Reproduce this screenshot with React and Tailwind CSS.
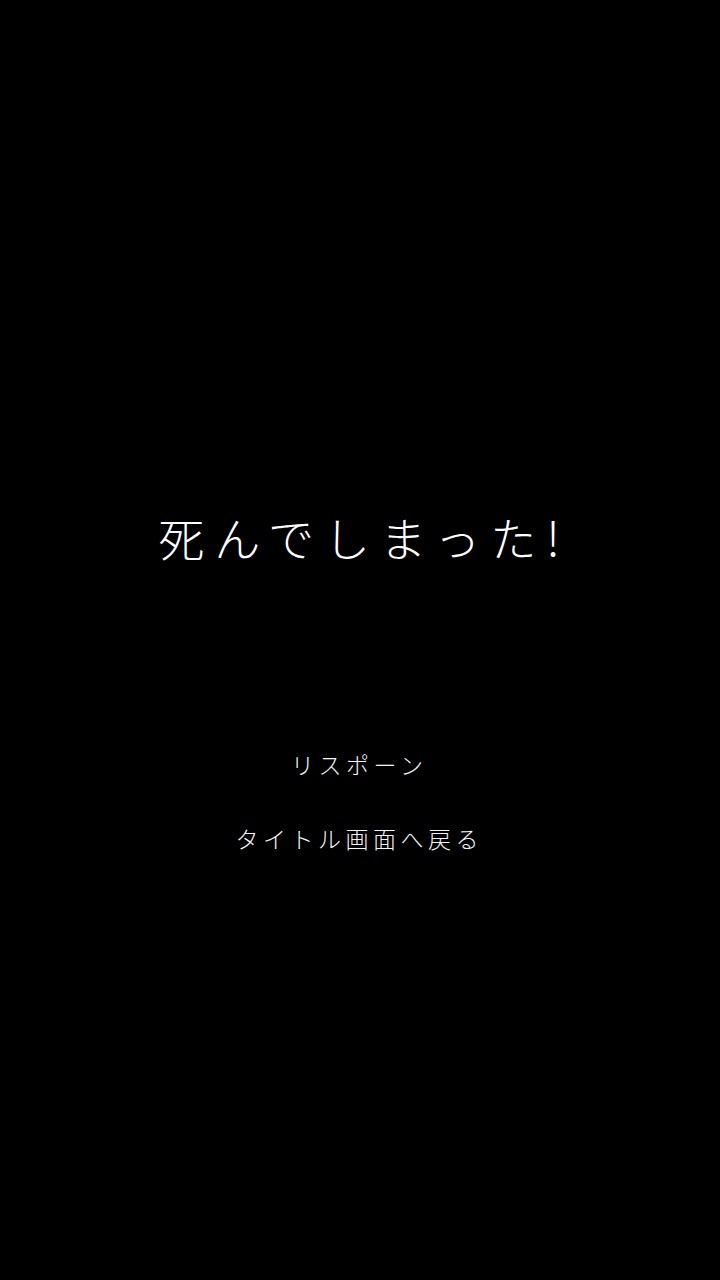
export default function App() {
  const jp = { fontFamily: '"Noto Sans CJK JP", "Noto Sans", sans-serif' };
  return (
    <div className="h-[1280px] w-full bg-black text-white flex flex-col items-center" style={jp}>
      {/* game over title */}
      <h1 className="mt-[508px] text-[46px] leading-[56px] font-light tracking-[10px] pl-[10px] mr-[2px]">
        死んでしまった!
      </h1>

      {/* menu */}
      <nav className="mt-[186px] flex flex-col items-center gap-[46px]">
        <button className="text-[23px] leading-[28px] font-light tracking-[4.5px] pl-[4.5px] mr-[6px] text-gray-100">
          リスポーン
        </button>
        <button className="text-[23px] leading-[28px] font-light tracking-[4.5px] pl-[4.5px] mr-[6px] text-gray-100">
          タイトル画面へ戻る
        </button>
      </nav>
    </div>
  );
}
